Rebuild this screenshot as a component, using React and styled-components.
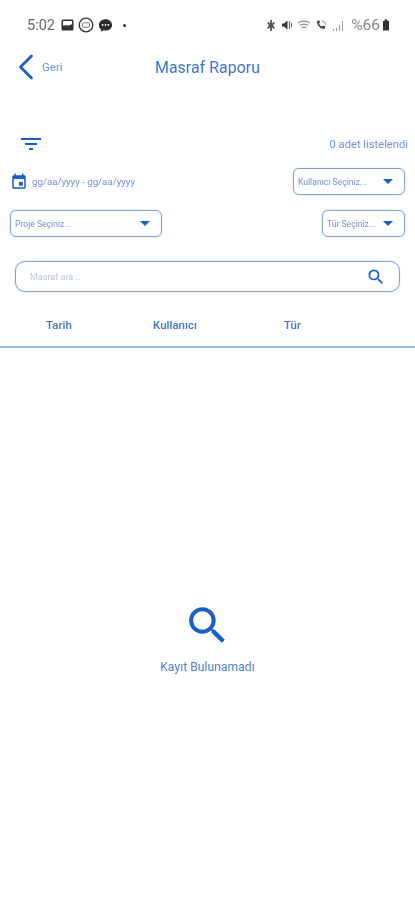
import React from "react";
import styled, { createGlobalStyle } from "styled-components";
import { ChevronLeft } from "lucide-react";
import { MdSearch, MdEvent } from "react-icons/md";

const BLUE = "#1a5fc4";
const TEXT = "#3f74c9";
const LABEL = "#6d92d6";
const BORDER = "#7f9fda";

const GlobalStyle = createGlobalStyle`
  html, body {
    margin: 0;
    padding: 0;
    background: #fff;
  }
  body {
    font-family: "Roboto", "Liberation Sans", sans-serif;
  }
`;

const App = () => {
  return (
    <>
      <GlobalStyle />
      <Page>
        <StatusBar>
          <StatusLeft>
            <Clock>5:02</Clock>
            <svg width="13" height="12" viewBox="0 0 13 12">
              <rect x="0.5" y="0.5" width="12" height="11" rx="1.5" fill="#333" />
              <rect x="2" y="2" width="9" height="4.500" fill="#fff" />
              <path d="M2 9l3-3 2 1.500 4-2.500v4z" fill="#333" />
            </svg>
            <svg width="16" height="16" viewBox="0 0 16 16">
              <circle cx="8" cy="8" r="6.800" fill="none" stroke="#333" strokeWidth="1.300" />
              <rect x="4.500" y="5.800" width="7" height="4.400" rx="1" fill="none" stroke="#777" strokeWidth="1" />
            </svg>
            <svg width="15" height="15" viewBox="0 0 13 13">
              <path d="M6.5 1C3.2 1 .8 3.2.8 6c0 1.5.7 2.8 1.900 3.700L2.400 12l2.600-1.300c.5.1 1 .2 1.500.2 3.300 0 5.700-2.200 5.700-4.900S9.800 1 6.500 1z" fill="#2c2c2c" />
              <circle cx="4" cy="6" r=".8" fill="#fff" />
              <circle cx="6.500" cy="6" r=".8" fill="#fff" />
              <circle cx="9" cy="6" r=".8" fill="#fff" />
            </svg>
            <Dot />
          </StatusLeft>
          <StatusRight>
            <svg width="12" height="13" viewBox="0 0 12 13">
              <path d="M6 1v11M2.500 3.500l7 6M9.500 3.500l-7 6" stroke="#444" strokeWidth="1.600" fill="none" />
              <circle cx="6" cy="6.500" r="2.500" fill="#555" />
            </svg>
            <svg width="12" height="12" viewBox="0 0 12 12">
              <path d="M1 4.500h2L6.500 1.500v9L3 7.500H1z" fill="#333" />
              <path d="M8.500 2v8M10.500 4v4" stroke="#666" strokeWidth="1.100" />
            </svg>
            <svg width="14" height="12" viewBox="0 0 15 12">
              <path d="M1 4c3.500-3 9.500-3 13 0M3 6.500c2.500-2 6.500-2 9 0M5 9c1.500-1 3.500-1 5 0" stroke="#888" strokeWidth="1.300" fill="none" />
            </svg>
            <svg width="13" height="12" viewBox="0 0 13 12">
              <path d="M2 2.500c0 4 3.500 7.500 7.500 7.500l1-2.500-2.500-1-1 1C5.500 7 4.500 6 4 4.500l1-1-1-2.500z" fill="#444" />
              <path d="M7 2c2 0 3.500 1.500 3.500 3.500" stroke="#777" fill="none" />
            </svg>
            <SignalBars>
              <Bar $h={2} />
              <Bar $h={3} />
              <Bar $h={6} />
              <Bar $h={10} />
            </SignalBars>
            <Battery>%66</Battery>
            <BatteryIcon width="8" height="12" viewBox="0 0 7 12">
              <path d="M2 .500h3v1.500h1.500v9.500h-6V2H2z" fill="#333" />
            </BatteryIcon>
          </StatusRight>
        </StatusBar>

        <Header>
          <BackButton>
            <ChevronLeft size={44} strokeWidth={1.5} color={BLUE} />
            <BackLabel>Geri</BackLabel>
          </BackButton>
          <Title>Masraf Raporu</Title>
        </Header>

        <FilterBar>
          <FilterIcon>
            <Line $w={20} />
            <Line $w={12} />
            <Line $w={4} />
          </FilterIcon>
          <Count>0 adet listelendi</Count>
        </FilterBar>

        <DateRow>
          <DateRange>
            <MdEvent size={18} color={BLUE} />
            <span>gg/aa/yyyy - gg/aa/yyyy</span>
          </DateRange>
          <Select $width={112}>
            <SelectLabel>Kullanıcı Seçiniz...</SelectLabel>
            <Caret />
          </Select>
        </DateRow>

        <SelectRow>
          <Select $width={152}>
            <SelectLabel>Proje Seçiniz...</SelectLabel>
            <Caret />
          </Select>
          <Select $width={83}>
            <SelectLabel>Tür Seçiniz...</SelectLabel>
            <Caret />
          </Select>
        </SelectRow>

        <SearchBox>
          <SearchText>Masraf ara ..</SearchText>
          <MdSearch size={20} color={BLUE} />
        </SearchBox>

        <TableHead>
          <HeadCell $width={107}>Tarih</HeadCell>
          <HeadCell $width={131}>Kullanıcı</HeadCell>
          <HeadCell>Tür</HeadCell>
        </TableHead>

        <Empty>
          <MdSearch size={49} color={BLUE} />
          <EmptyText>Kayıt Bulunamadı</EmptyText>
        </Empty>
      </Page>
    </>
  );
};

export default App;

const Page = styled.div`
  width: 415px;
  height: 900px;
  overflow: hidden;
  background: #fff;
  display: flex;
  flex-direction: column;
  filter: blur(0.5px);
`;

const StatusBar = styled.div`
  height: 50px;
  box-sizing: border-box;
  padding: 0 25px 0 27px;
  display: flex;
  align-items: center;
  justify-content: space-between;
`;

const StatusLeft = styled.div`
  display: flex;
  align-items: center;
  gap: 4px;
`;

const Clock = styled.span`
  font-size: 14.5px;
  color: #666;
  margin-right: 2px;
`;

const Dot = styled.span`
  width: 3px;
  height: 3px;
  margin-left: 6px;
  border-radius: 50%;
  background: #333;
`;

const StatusRight = styled.div`
  display: flex;
  align-items: center;
  gap: 4px;
`;

const SignalBars = styled.div`
  display: flex;
  align-items: flex-end;
  gap: 2px;
  height: 11px;
  margin-left: 1px;
`;

const Bar = styled.span`
  width: 1px;
  height: ${(p) => p.$h}px;
  background: #999;
`;

const Battery = styled.span`
  font-size: 15.5px;
  color: #888;
  margin-left: 4px;
`;

const BatteryIcon = styled.svg`
  margin-left: -2px;
`;

const Header = styled.div`
  height: 34px;
  display: flex;
  align-items: center;
  justify-content: center;
  position: relative;
`;

const BackButton = styled.div`
  position: absolute;
  left: 4px;
  top: -5px;
  display: flex;
  align-items: center;
`;

const BackLabel = styled.span`
  font-size: 11.5px;
  color: ${LABEL};
  margin-left: -6px;
`;

const Title = styled.div`
  font-size: 16px;
  color: ${TEXT};
`;

const FilterBar = styled.div`
  margin-top: 48px;
  height: 24px;
  padding: 0 7px 0 21px;
  display: flex;
  align-items: center;
  justify-content: space-between;
`;

const FilterIcon = styled.div`
  display: flex;
  flex-direction: column;
  align-items: center;
  gap: 3px;
`;

const Line = styled.span`
  display: block;
  width: ${(p) => p.$w}px;
  height: 2px;
  background: ${BLUE};
`;

const Count = styled.span`
  font-size: 11.2px;
  color: ${LABEL};
`;

const DateRow = styled.div`
  margin-top: 12px;
  padding: 0 10px;
  display: flex;
  align-items: center;
  justify-content: space-between;
`;

const DateRange = styled.div`
  display: flex;
  align-items: center;
  gap: 4px;
  font-size: 9.7px;
  color: ${LABEL};
`;

const SelectRow = styled.div`
  margin-top: 15px;
  padding: 0 10px;
  display: flex;
  align-items: center;
  justify-content: space-between;
`;

const Select = styled.div`
  width: ${(p) => p.$width}px;
  height: 27px;
  box-sizing: border-box;
  border: 1px solid ${BORDER};
  box-shadow: 0 0 1px ${BORDER};
  border-radius: 6px;
  padding: 0 11px 0 4px;
  display: flex;
  align-items: center;
  justify-content: space-between;
`;

const SelectLabel = styled.span`
  font-size: 8.6px;
  color: ${LABEL};
  white-space: nowrap;
`;

const Caret = styled.span`
  width: 0;
  height: 0;
  border-left: 5px solid transparent;
  border-right: 5px solid transparent;
  border-top: 5px solid ${BLUE};
`;

const SearchBox = styled.div`
  margin: 24px 15px 0;
  height: 31px;
  box-sizing: border-box;
  border: 1px solid ${BORDER};
  box-shadow: 0 0 1px ${BORDER};
  border-radius: 10px;
  padding: 0 13px 0 14px;
  display: flex;
  align-items: center;
  justify-content: space-between;
`;

const SearchText = styled.span`
  font-size: 9px;
  color: #b3c5e8;
`;

const TableHead = styled.div`
  margin-top: 19px;
  height: 37px;
  box-sizing: border-box;
  padding: 0 0 7px 46px;
  border-bottom: 2px solid #a3bbe8;
  display: flex;
  align-items: center;
`;

const HeadCell = styled.span`
  width: ${(p) => (p.$width ? `${p.$width}px` : "auto")};
  font-size: 11.5px;
  font-weight: 500;
  color: ${TEXT};
`;

const Empty = styled.div`
  margin-top: 253px;
  display: flex;
  flex-direction: column;
  align-items: center;
`;

const EmptyText = styled.div`
  margin-top: 10px;
  font-size: 12.2px;
  color: #4f80cf;
`;
